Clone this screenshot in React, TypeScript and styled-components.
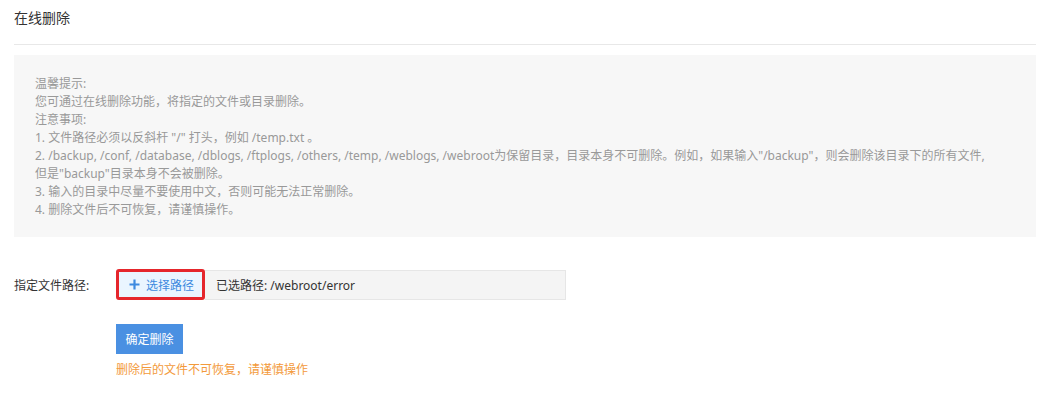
import styled, { createGlobalStyle } from 'styled-components';

const GlobalStyle = createGlobalStyle`
  body {
    margin: 0;
    background: #fff;
    font-family: "Noto Sans", "Noto Sans CJK SC", sans-serif;
    color: #333;
  }
`;

const Page = styled.div`
  padding: 0 12px 0 14px;
`;

const Title = styled.h2`
  margin: 0;
  font-size: 14px;
  font-weight: normal;
  line-height: 36px;
  padding-bottom: 8px;
  border-bottom: 1px solid #e8e8e8;
  color: #333;
`;

const Notice = styled.div`
  margin-top: 10px;
  background: #f7f7f7;
  padding: 20px 21px 18px;
  font-size: 12px;
  line-height: 18px;
  color: #999;
`;

const NoticeLine = styled.p`
  margin: 0;
  white-space: nowrap;
`;

const Form = styled.div`
  padding-top: 32px;
`;

const FormRow = styled.div`
  display: flex;
  align-items: center;
`;

const Label = styled.label`
  width: 102px;
  font-size: 12px;
  color: #333;
`;

const PathGroup = styled.div`
  display: flex;
  align-items: center;
`;

const PickButton = styled.button`
  display: flex;
  align-items: center;
  gap: 6px;
  width: 89px;
  height: 31px;
  box-sizing: border-box;
  padding: 0 0 0 10px;
  border: 3px solid #e5262c;
  border-radius: 3px;
  background: #eaf5ff;
  color: #3d8ae0;
  font-family: inherit;
  font-size: 12px;
  cursor: pointer;
`;

const PathField = styled.div`
  display: flex;
  align-items: center;
  width: 361px;
  height: 30px;
  box-sizing: border-box;
  padding: 0 11px;
  background: #f4f4f4;
  border: 1px solid #e6e6e6;
  border-left: none;
  font-size: 12px;
  color: #333;
`;

const Actions = styled.div`
  margin: 24px 0 0 102px;
`;

const ConfirmButton = styled.button`
  width: 67px;
  height: 30px;
  border: none;
  background: #4a90e2;
  color: #fff;
  font-family: inherit;
  font-size: 12px;
  cursor: pointer;
`;

const Warning = styled.p`
  margin: 7px 0 0;
  font-size: 12px;
  line-height: 18px;
  color: #f39a3b;
`;

const PlusIcon = () => (
  <svg width="11" height="11" viewBox="0 0 11 11">
    <path d="M5.5 0.5v10M0.5 5.5h10" stroke="#3d8ae0" strokeWidth="2.2" />
  </svg>
);

const notice = [
  '温馨提示:',
  '您可通过在线删除功能，将指定的文件或目录删除。',
  '注意事项:',
  '1. 文件路径必须以反斜杆 "/" 打头，例如 /temp.txt 。',
  '2. /backup, /conf, /database, /dblogs, /ftplogs, /others, /temp, /weblogs, /webroot为保留目录，目录本身不可删除。例如，如果输入"/backup"，则会删除该目录下的所有文件,',
  '但是"backup"目录本身不会被删除。',
  '3. 输入的目录中尽量不要使用中文，否则可能无法正常删除。',
  '4. 删除文件后不可恢复，请谨慎操作。',
];

export default function App() {
  return (
    <>
      <GlobalStyle />
      <Page>
        <Title>在线删除</Title>
        <Notice>
          {notice.map((line, i) => (
            <NoticeLine key={i}>{line}</NoticeLine>
          ))}
        </Notice>
        <Form>
          <FormRow>
            <Label>指定文件路径:</Label>
            <PathGroup>
              <PickButton>
                <PlusIcon />
                选择路径
              </PickButton>
              <PathField>已选路径: /webroot/error</PathField>
            </PathGroup>
          </FormRow>
          <Actions>
            <ConfirmButton>确定删除</ConfirmButton>
            <Warning>删除后的文件不可恢复，请谨慎操作</Warning>
          </Actions>
        </Form>
      </Page>
    </>
  );
}
